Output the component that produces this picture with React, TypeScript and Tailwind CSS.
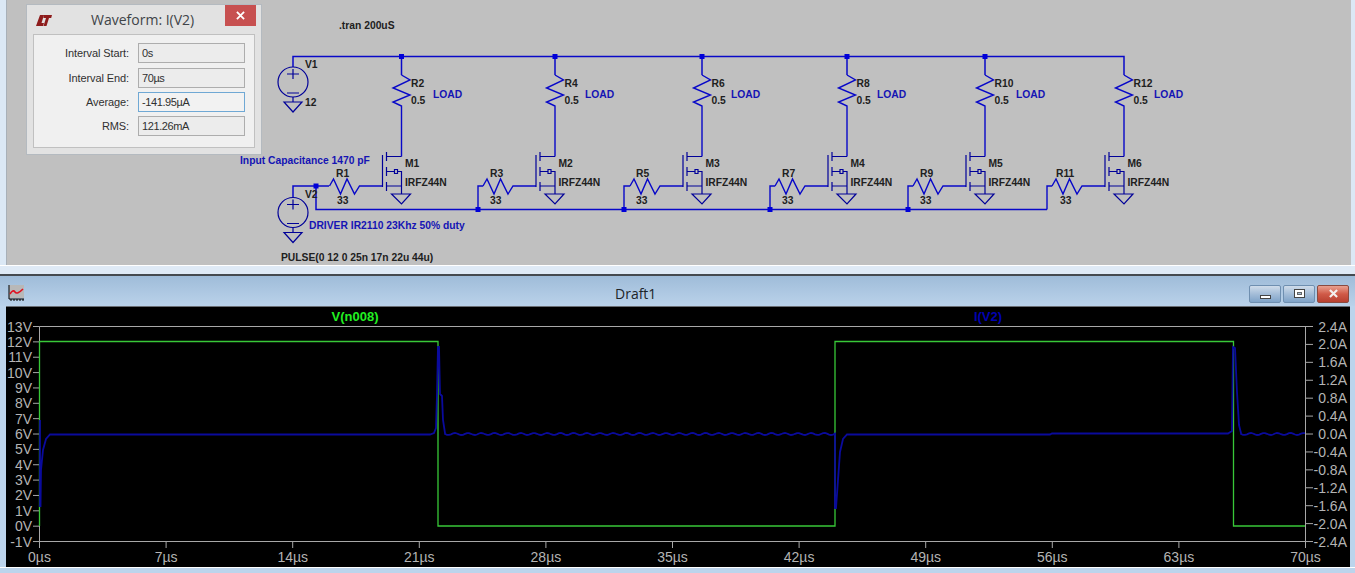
const drains = [401.5, 555, 702, 847, 985, 1124];
const rNames = ["R2", "R4", "R6", "R8", "R10", "R12"];
const gNames = ["R1", "R3", "R5", "R7", "R9", "R11"];
const gLabelX = [336, 490, 636, 782, 920, 1056];
const gValueX = [337, 490, 636, 782, 920, 1060];
const loadX = [433, 585, 731, 877, 1016, 1154];
const dots = [[401.5, 56.5], [555, 56.5], [702, 56.5], [847, 56.5], [985, 56.5], [316, 186], [478, 209.5], [624, 209.5], [770, 209.5], [908, 209.5]];
const tapX = [478, 624, 770, 908, 1047];

const leftTicks = ["13V", "12V", "11V", "10V", "9V", "8V", "7V", "6V", "5V", "4V", "3V", "2V", "1V", "0V", "-1V"];
const rightTicks = ["2.4A", "2.0A", "1.6A", "1.2A", "0.8A", "0.4A", "0.0A", "-0.4A", "-0.8A", "-1.2A", "-1.6A", "-2.0A", "-2.4A"];
const xTicks = ["0µs", "7µs", "14µs", "21µs", "28µs", "35µs", "42µs", "49µs", "56µs", "63µs", "70µs"];

function ripple(from: number, to: number) {
  let d = "";
  for (let x = from; x <= to; x += 2) {
    d += ` L${x} ${(434 + Math.sin((x - from) / 2.1)).toFixed(1)}`;
  }
  return d;
}

const bluePath =
  "M40 507 L40 420 M40.5 507 L41 470 L43 450 L46 439 L50 434.5 L430 434.5 L434 433 L436 428 L437 395 L438 347 L439 347 L440 394 L442 396 L443 420 L445 433" +
  ripple(445, 835) +
  " L835 508 L836 508 L838 480 L840 452 L843 439 L847 434.5 L1050 434.5 L1052 433.5 L1228 433.5 L1232 431 L1233 347 L1235 348 L1237 392 L1239 425 L1241 433" +
  ripple(1241, 1305);

function Mosfet({ d }: { d: number }) {
  return (
    <g className="fill-none stroke-[#000098] stroke-[1.2]">
      <path d={`M${d - 19} 155 V187 M${d - 15} 152 V161 M${d - 15} 167 V176 M${d - 15} 182 V191`} />
      <path d={`M${d - 15} 156.5 H${d} M${d - 15} 186 H${d} V194 M${d - 15} 171.5 H${d - 7} M${d - 7} 169.5 h3 v4 h-3 z M${d - 4} 171.5 H${d} V186`} />
      <path d={`M${d - 10} 194 H${d + 9} L${d} 204 Z`} />
    </g>
  );
}

function Ground({ x, y }: { x: number; y: number }) {
  return <path d={`M${x - 9} ${y} H${x + 9} L${x} ${y + 10} Z`} className="fill-none stroke-[#000098] stroke-[1.2]" />;
}

function Source({ y }: { y: number }) {
  return (
    <g className="fill-none stroke-[#000098] stroke-[1.2]">
      <circle cx={293} cy={y} r={15} />
      <path d={`M287 ${y - 8} H299 M293 ${y - 13} V${y - 3} M287 ${y + 11} H299 M293 ${y + 15} V${y + 20}`} />
    </g>
  );
}

function Schematic() {
  return (
    <svg viewBox="7 0 1344 265" className="block h-[265px] w-[1344px] text-[10.3px] font-bold">
      <path
        d="M293 67 V56.5 H1124 V75 M401.5 56.5 V75 M555 56.5 V75 M702 56.5 V75 M847 56.5 V75 M985 56.5 V75"
        className="fill-none stroke-[#0808c8] stroke-[1.5]"
      />
      <path d="M293 197 V186 H329 M316 186 V209.5 H1047" className="fill-none stroke-[#0808c8] stroke-[1.5]" />
      <Source y={82} />
      <Ground x={293} y={102} />
      <Source y={212.5} />
      <Ground x={293} y={232.5} />
      {drains.map((d, i) => (
        <g key={d}>
          <path
            d={`M${d} 75 L${d + 8.5} 80 L${d - 8.5} 88 L${d + 8.5} 95 L${d - 8.5} 102 L${d} 106 V156.5`}
            className="fill-none stroke-[#0808c8] stroke-[1.4]"
          />
          <path
            d={`M${d - 72} 186 l4 -7 l7 15 l6.5 -15 l7.5 15 l5 -8 H${d - 19}${i > 0 ? ` M${d - 72} 186 H${tapX[i - 1]} V209.5` : ""}`}
            className="fill-none stroke-[#0808c8] stroke-[1.4]"
          />
          <Mosfet d={d} />
          <text x={d + 9.5} y={87} className="fill-[#202020]">{rNames[i]}</text>
          <text x={d + 9.5} y={104} className="fill-[#202020]">0.5</text>
          <text x={loadX[i]} y={98} className="fill-[#1414b4]">LOAD</text>
          <text x={d + 3.5} y={167} className="fill-[#202020]">M{i + 1}</text>
          <text x={d + 3.5} y={186} className="fill-[#202020]">IRFZ44N</text>
          <text x={gLabelX[i]} y={177} className="fill-[#202020]">{gNames[i]}</text>
          <text x={gValueX[i]} y={204} className="fill-[#202020]">33</text>
        </g>
      ))}
      {dots.map(([x, y]) => (
        <rect key={`${x}-${y}`} x={x - 2.5} y={y - 2.5} width={5} height={5} className="fill-[#0000d8]" />
      ))}
      <text x={305} y={68} className="fill-[#202020]">V1</text>
      <text x={305} y={106} className="fill-[#202020]">12</text>
      <text x={305} y={198} className="fill-[#202020]">V2</text>
      <text x={339} y={29} className="fill-[#202020]">.tran 200uS</text>
      <text x={240} y={163.5} className="fill-[#1414b4]">Input Capacitance 1470 pF</text>
      <text x={309} y={229} className="fill-[#1414b4]">DRIVER IR2110 23Khz 50% duty</text>
      <text x={281} y={260.5} className="fill-[#202020]">PULSE(0 12 0 25n 17n 22u 44u)</text>
    </svg>
  );
}

function Field({ label, value, focused }: { label: string; value: string; focused?: boolean }) {
  return (
    <div className="flex items-center">
      <span className="w-[96px] pr-[9px] text-right text-[11px] tracking-[-0.1px] text-[#303030]">{label}</span>
      <div
        className={`flex h-5 w-[107px] items-center border px-[3px] text-[11px] tracking-[-0.4px] text-[#303030] ${
          focused ? "border-[#6fa8d4] bg-[#f2f2f2]" : "border-[#adadad] bg-[#ececec]"
        }`}
      >
        {value}
      </div>
    </div>
  );
}

function WaveformDialog() {
  return (
    <div className="absolute left-[19px] top-1 h-[151px] w-[236px] border border-[#b4bac0] bg-[#e2e2e2]">
      <div className="flex h-[29px] items-center">
        <svg viewBox="0 0 16 12" className="ml-[9px] mt-[2px] h-3 w-4">
          <path d="M4 0 H8 L5.5 8 H8 L7 11 H0 Z M8 0 H16 L15.2 3 H13 L10.5 11 H7.5 L10 3 H7.5 Z" className="fill-[#8e1c1c]" />
        </svg>
        <span className="ml-[39px] text-[14px] text-[#404448] font-['Open_Sans',sans-serif]">Waveform: I(V2)</span>
        <div className="ml-auto mr-[5px] flex h-[21px] w-[31px] -translate-y-[4px] items-center justify-center bg-[#c75050]">
          <svg viewBox="0 0 10 10" className="h-[9px] w-[9px]">
            <path d="M1 1 L9 9 M9 1 L1 9" className="fill-none stroke-white stroke-2" />
          </svg>
        </div>
      </div>
      <div className="mx-[6px] flex h-[114px] flex-col gap-1 border border-[#c0c0c0] bg-[#f0f0f0] pl-[8px] pt-[8px]">
        <div className="mb-px">
          <Field label="Interval Start:" value="0s" />
        </div>
        <Field label="Interval End:" value="70µs" />
        <Field label="Average:" value="-141.95µA" focused />
        <Field label="RMS:" value="121.26mA" />
      </div>
    </div>
  );
}

function Chart() {
  return (
    <svg viewBox="6 307 1344 260" className="block h-[260px] w-[1344px] text-[14px]">
      <path d="M39.5 326.5 H1305.5 V541.5 H39.5 Z" className="fill-none stroke-[#a8a8a8]" />
      {leftTicks.map((t, i) => {
        const y = 326.5 + i * 15.36;
        return (
          <g key={t}>
            <path d={`M33 ${y} H39.5`} className="stroke-[#a8a8a8]" />
            <text x={32} y={y + 5} textAnchor="end" className="fill-[#b4b4b4]">{t}</text>
          </g>
        );
      })}
      {rightTicks.map((t, i) => {
        const y = 326.5 + i * 17.92;
        return (
          <g key={t}>
            <path d={`M1305 ${y} H1313`} className="stroke-[#a8a8a8]" />
            <text x={1347} y={y + 5} textAnchor="end" className="fill-[#b4b4b4]">{t}</text>
          </g>
        );
      })}
      {xTicks.map((t, i) => {
        const x = 39.5 + i * 126.6;
        return (
          <g key={t}>
            <path d={`M${x} 541 V548`} className="stroke-[#a8a8a8]" />
            <text x={x} y={562} textAnchor="middle" className="fill-[#b4b4b4]">{t}</text>
          </g>
        );
      })}
      <path d="M39.5 526 V341.5 H438 V526 H835 V341.5 H1233.5 V526 H1305" className="fill-none stroke-[#38c838] stroke-[1.3]" />
      <path d={bluePath} className="fill-none stroke-[#0a0a9c] stroke-[1.8]" />
      <text x={355} y={321} textAnchor="middle" className="fill-[#22f022] text-[13px] font-bold">V(n008)</text>
      <text x={988} y={321} textAnchor="middle" className="fill-[#0000b0] text-[13px] font-bold">I(V2)</text>
    </svg>
  );
}

function CaptionButton({ kind }: { kind: "min" | "max" | "close" }) {
  if (kind === "close") {
    return (
      <div className="flex h-[18px] w-8 items-center justify-center rounded-[2px] border border-[#8a4a40] bg-gradient-to-b from-[#e8a090] via-[#d05a48] to-[#b84030]">
        <svg viewBox="0 0 12 10" className="h-[9px] w-[11px]">
          <path d="M2 1 L10 9 M10 1 L2 9" className="fill-none stroke-[#f4f0ee] stroke-[2.4]" />
        </svg>
      </div>
    );
  }
  return (
    <div className="flex h-[18px] w-8 items-center justify-center rounded-[2px] border border-[#6f8fb0] bg-gradient-to-b from-[#cfdcea] via-[#a4bdd8] to-[#7fa3c8]">
      {kind === "min" ? (
        <div className="mt-[6px] h-1 w-[11px] border border-[#444] bg-white" />
      ) : (
        <div className="flex h-[9px] w-[11px] items-center justify-center border border-[#444] bg-white">
          <div className="h-[3px] w-[5px] border border-[#666] bg-[#a4bdd8]" />
        </div>
      )}
    </div>
  );
}

export default function App() {
  return (
    <div className="flex h-[573px] w-[1355px] flex-col overflow-hidden bg-[#dbe8f5] font-['Liberation_Sans',Arial,sans-serif]">
      <div className="pl-[6px]">
        <div className="relative h-[265px] w-[1345px] border-l border-[#a8b0b8] bg-[#c0c0c0]">
          <Schematic />
          <WaveformDialog />
        </div>
      </div>
      <div className="h-[9px] border-t border-white bg-[#dfeaf6]" />
      <div className="h-[2px] bg-[#454a50]" />
      <div className="flex min-h-0 flex-1 flex-col bg-[#bcd4ec]">
        <div className="relative flex h-[30px] items-center bg-gradient-to-b from-[#9fbcd9] to-[#bad2ea] pl-2 pr-[6px]">
          <svg viewBox="0 0 16 16" className="mt-[4px] h-4 w-4">
            <rect x="1" y="0" width="15" height="13" className="fill-[#b8b8b8]" />
            <path d="M1 0 V14 H16 M3 14 V16 M6 14 V16 M9 14 V16 M12 14 V16 M15 14 V16" className="fill-none stroke-black" />
            <path d="M2 9 Q5 4 7 7 T15 4" className="fill-none stroke-[#e01020] stroke-[1.6]" />
          </svg>
          <span className="absolute left-[615px] top-[10px] text-[14px] leading-[16px] text-[#202428] font-['Open_Sans',sans-serif]">Draft1</span>
          <div className="ml-auto mt-[5px] flex gap-[2px]">
            <CaptionButton kind="min" />
            <CaptionButton kind="max" />
            <CaptionButton kind="close" />
          </div>
        </div>
        <div className="ml-[6px] w-[1344px] border-t border-[#6a6e74] bg-black">
          <Chart />
        </div>
        <div className="h-px bg-white" />
      </div>
    </div>
  );
}
